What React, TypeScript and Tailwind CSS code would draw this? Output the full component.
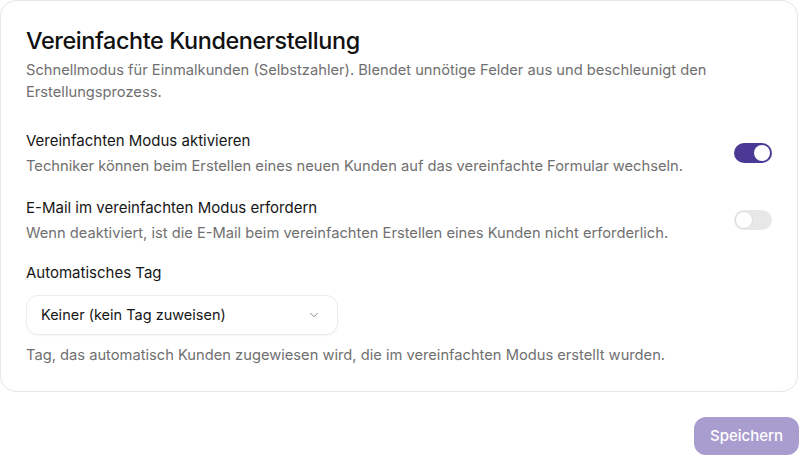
import { ChevronDown } from "lucide-react";

function Toggle({ on }: { on: boolean }) {
  return (
    <button
      className={
        "relative flex h-5 w-[38px] shrink-0 items-center rounded-full px-[2px] " +
        (on ? "justify-end bg-[#4a3a95]" : "justify-start bg-[#e8e8e8]")
      }
    >
      <span
        className={
          "block h-4 w-4 rounded-full bg-white " +
          (on ? "" : "shadow-[0_0_0_1px_#dcdcdc]")
        }
      />
    </button>
  );
}

const rows = [
  {
    label: "Vereinfachten Modus aktivieren",
    body: "Techniker können beim Erstellen eines neuen Kunden auf das vereinfachte Formular wechseln.",
    on: true,
  },
  {
    label: "E-Mail im vereinfachten Modus erfordern",
    body: "Wenn deaktiviert, ist die E-Mail beim vereinfachten Erstellen eines Kunden nicht erforderlich.",
    on: false,
  },
];

export default function App() {
  return (
    <div className="h-[456px] w-[800px] overflow-hidden bg-white font-['Inter',sans-serif] text-[#161616]">
      <section className="w-[798px] rounded-2xl border border-[#e6e6e6] bg-white px-[25px] pb-[25px] pt-6">
        <h1 className="text-[23.4px] font-medium leading-8 tracking-[-0.4px] text-[#111]">
          Vereinfachte Kundenerstellung
        </h1>
        <p className="mt-0.5 text-[14.7px] leading-[22px] text-[#707070]">
          Schnellmodus für Einmalkunden (Selbstzahler). Blendet unnötige Felder aus und beschleunigt den
          Erstellungsprozess.
        </p>

        <div className="mt-[26px] flex flex-col gap-[19px]">
          {rows.map((r) => (
            <div key={r.label} className="flex items-center justify-between gap-6">
              <div>
                <h2 className="text-[15px] leading-6">{r.label}</h2>
                <p className="mt-0.5 text-[14.7px] leading-[22px] text-[#707070]">{r.body}</p>
              </div>
              <Toggle on={r.on} />
            </div>
          ))}
        </div>

        <div className="mt-[17px]">
          <h2 className="text-[15px] leading-6">Automatisches Tag</h2>
          <button className="mt-[10px] flex h-10 w-[312px] items-center justify-between rounded-xl border border-[#ececec] bg-white pl-[14px] pr-4 text-[14.5px] shadow-[0_1px_2px_rgba(0,0,0,0.04)]">
            <span>Keiner (kein Tag zuweisen)</span>
            <ChevronDown size={14} strokeWidth={1.5} className="text-[#777]" />
          </button>
          <p className="mt-[9px] text-[14.7px] leading-[22px] text-[#707070]">
            Tag, das automatisch Kunden zugewiesen wird, die im vereinfachten Modus erstellt wurden.
          </p>
        </div>
      </section>

      <div className="mt-[25px] flex justify-end pr-px">
        <button className="h-[38px] rounded-xl bg-[#a99dd0] px-4 text-[15px] font-medium text-white">
          Speichern
        </button>
      </div>
    </div>
  );
}
